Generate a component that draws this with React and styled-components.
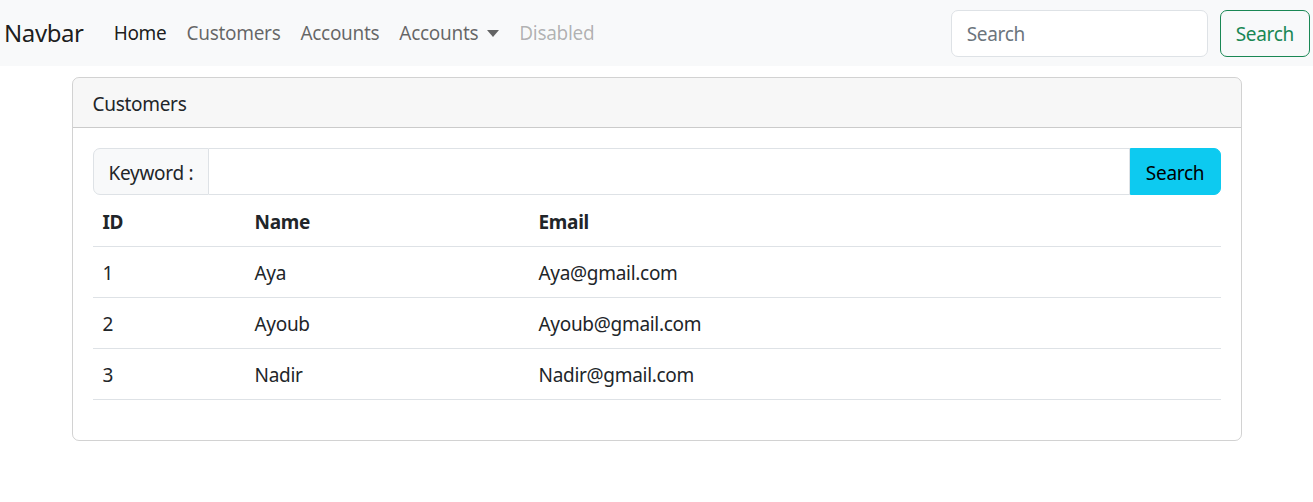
import React from "react";
import styled, { createGlobalStyle } from "styled-components";

const GlobalStyle = createGlobalStyle`
  * {
    box-sizing: border-box;
  }

  body {
    margin: 0;
    background: #fff;
    color: #212529;
    font-family: "Noto Sans", "Open Sans", sans-serif;
    font-size: 19px;
    letter-spacing: -0.3px;
    line-height: 30px;
  }
`;

const Nav = styled.nav`
  display: flex;
  align-items: center;
  height: 66px;
  padding: 0 3px 0 4px;
  background-color: #f8f9fa;
`;

const Brand = styled.a`
  font-size: 24px;
  letter-spacing: -0.4px;
  color: rgba(0, 0, 0, 0.9);
  margin-right: 20px;
  text-decoration: none;
`;

const NavList = styled.ul`
  display: flex;
  list-style: none;
  margin: 0;
  padding: 0;
  flex: 1;
`;

const NavLink = styled.a`
  display: flex;
  align-items: center;
  padding: 0 10px;
  text-decoration: none;
  color: ${(p) =>
    p.$active ? "rgba(0,0,0,0.9)" : p.$disabled ? "rgba(0,0,0,0.3)" : "rgba(0,0,0,0.6)"};
`;

const Caret = styled.span`
  display: inline-block;
  margin-left: 9px;
  border-top: 7px solid currentColor;
  border-left: 6px solid transparent;
  border-right: 6px solid transparent;
`;

const SearchForm = styled.form`
  display: flex;
  align-items: center;
  gap: 12px;
`;

const NavInput = styled.input`
  width: 257px;
  height: 47px;
  padding: 2px 15px 0;
  font: inherit;
  letter-spacing: inherit;
  color: #212529;
  border: 1px solid #dee2e6;
  border-radius: 7px;
  background: #fff;

  &::placeholder {
    color: #6c757d;
  }
`;

const OutlineButton = styled.button`
  height: 47px;
  padding: 2px 15px 0;
  font: inherit;
  letter-spacing: inherit;
  color: #198754;
  background: transparent;
  border: 1px solid #198754;
  border-radius: 7px;
`;

const Container = styled.div`
  width: 1170px;
  margin: 11px auto 0;
`;

const Card = styled.div`
  border: 1px solid rgba(0, 0, 0, 0.175);
  border-radius: 7px;
  overflow: hidden;
`;

const CardHeader = styled.div`
  height: 50px;
  display: flex;
  align-items: center;
  padding: 3px 20px 0;
  background: rgba(0, 0, 0, 0.03);
  border-bottom: 1px solid rgba(0, 0, 0, 0.175);
`;

const CardBody = styled.div`
  padding: 20px;
`;

const InputGroup = styled.div`
  display: flex;
  height: 47px;
`;

const GroupLabel = styled.span`
  display: flex;
  align-items: center;
  padding: 3px 15px 0;
  background: #f8f9fa;
  border: 1px solid #dee2e6;
  border-radius: 7px 0 0 7px;
`;

const GroupInput = styled.input`
  flex: 1;
  min-width: 0;
  font: inherit;
  border: 1px solid #dee2e6;
  border-left: none;
  padding: 0 15px;
`;

const InfoButton = styled.button`
  width: 91px;
  padding-top: 3px;
  font: inherit;
  letter-spacing: inherit;
  color: #000;
  background: #0dcaf0;
  border: 1px solid #0dcaf0;
  border-radius: 0 7px 7px 0;
`;

const Table = styled.table`
  width: 100%;
  border-collapse: collapse;
  margin-bottom: 20px;
`;

const Th = styled.th`
  text-align: left;
  font-weight: 700;
  height: 51px;
  padding: 4px 10px 0;
  border-bottom: 1px solid #dee2e6;
  width: ${(p) => p.$w || "auto"};
`;

const Td = styled.td`
  height: 51px;
  padding: 3px 10px 0;
  border-bottom: 1px solid #dee2e6;
`;

const customers = [
  { id: 1, name: "Aya", email: "Aya@gmail.com" },
  { id: 2, name: "Ayoub", email: "Ayoub@gmail.com" },
  { id: 3, name: "Nadir", email: "Nadir@gmail.com" },
];

const App = () => {
  return (
    <>
      <GlobalStyle />
      <Nav>
        <Brand href="#">Navbar</Brand>
        <NavList>
          <li><NavLink href="#" $active>Home</NavLink></li>
          <li><NavLink href="#">Customers</NavLink></li>
          <li><NavLink href="#">Accounts</NavLink></li>
          <li><NavLink href="#">Accounts<Caret /></NavLink></li>
          <li><NavLink $disabled>Disabled</NavLink></li>
        </NavList>
        <SearchForm onSubmit={(e) => e.preventDefault()}>
          <NavInput placeholder="Search" />
          <OutlineButton>Search</OutlineButton>
        </SearchForm>
      </Nav>
      <Container>
        <Card>
          <CardHeader>Customers</CardHeader>
          <CardBody>
            <InputGroup>
              <GroupLabel>Keyword :</GroupLabel>
              <GroupInput />
              <InfoButton>Search</InfoButton>
            </InputGroup>
            <Table>
              <thead>
                <tr>
                  <Th $w="152px">ID</Th>
                  <Th $w="284px">Name</Th>
                  <Th>Email</Th>
                </tr>
              </thead>
              <tbody>
                {customers.map((c) => (
                  <tr key={c.id}>
                    <Td>{c.id}</Td>
                    <Td>{c.name}</Td>
                    <Td>{c.email}</Td>
                  </tr>
                ))}
              </tbody>
            </Table>
          </CardBody>
        </Card>
      </Container>
    </>
  );
};

export default App;
